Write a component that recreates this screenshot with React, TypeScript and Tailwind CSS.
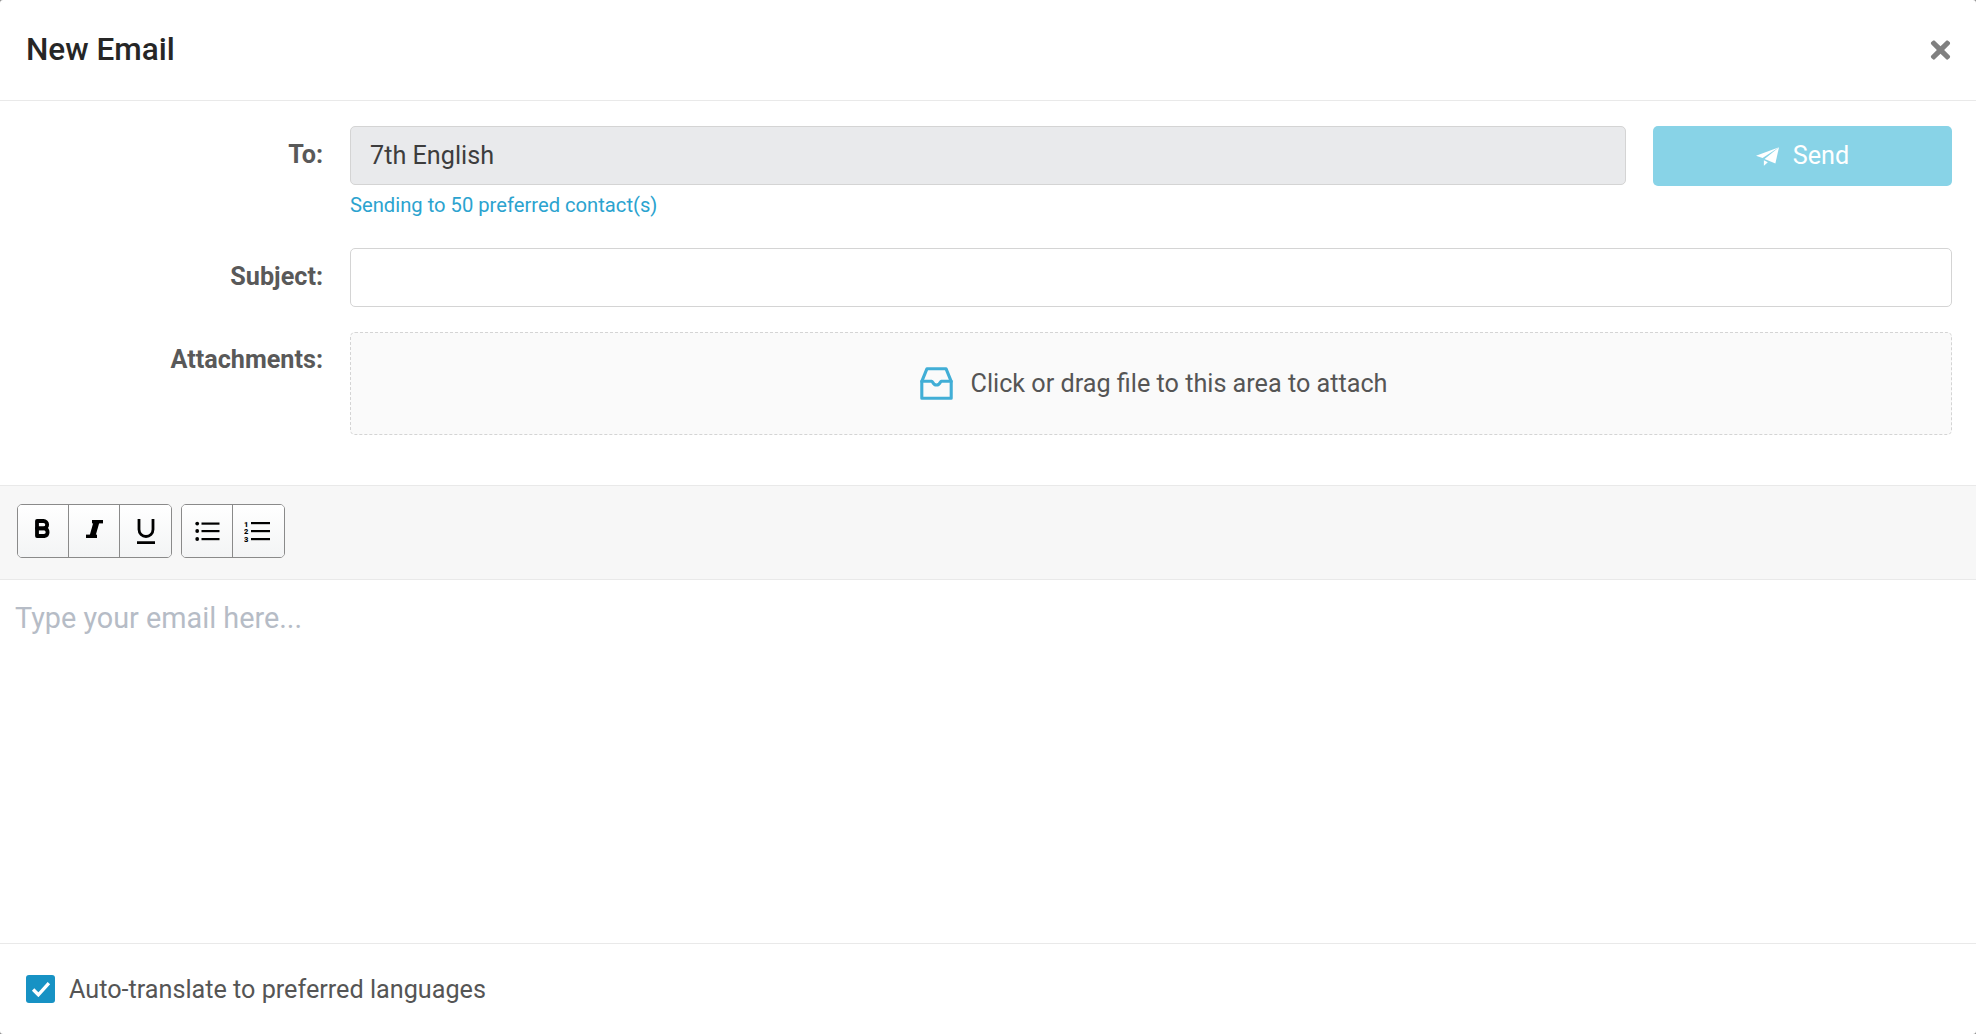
import React from "react";
import { FaTimes } from "react-icons/fa";

function InboxIcon() {
  return (
    <svg width="33" height="33" viewBox="0 0 33 33" fill="none" stroke="#41aed6" strokeWidth="3.1" strokeLinejoin="round" strokeLinecap="round">
      <path d="M7 1.7h19l5.2 12.6v17H1.8v-17z" />
      <path d="M1.8 14.2h10c1 0 1 3.8 4.7 3.8s3.7-3.8 4.7-3.8h10" />
    </svg>
  );
}

function ToolButton({ children, last }: { children: React.ReactNode; last?: boolean }) {
  return (
    <div className={"flex items-center justify-center h-full bg-gradient-to-b from-white to-[#f3f4f5] " + (last ? "" : "border-r border-[#8a8a8a]")}>
      {children}
    </div>
  );
}

function BoldIcon() {
  return (
    <svg width="16" height="19" viewBox="0 0 16 19" fill="none" stroke="black" strokeWidth="3.8" strokeLinejoin="round" className="mb-[5px]">
      <path d="M2 2h6.5a3.6 3.6 0 0 1 0 7.3H2z" />
      <path d="M2 9.3h7.3a3.9 3.9 0 0 1 0 7.7H2z" />
    </svg>
  );
}

function ItalicIcon() {
  return (
    <svg width="17" height="20" viewBox="0 0 17 20" fill="black" className="mb-[4px]">
      <rect x="6" y="1" width="11" height="3.4" />
      <rect x="0" y="15.6" width="11" height="3.4" />
      <polygon points="7.5,3 13.5,3 9.5,17 3.5,17" />
    </svg>
  );
}

function UnderlineIcon() {
  return (
    <svg width="20" height="26" viewBox="0 0 20 26" fill="none" stroke="black">
      <path d="M3 1v10.5a7 7 0 0 0 14 0V1" strokeWidth="2.8" />
      <path d="M1 24.6h18" strokeWidth="2.8" />
    </svg>
  );
}

function BulletIcon() {
  return (
    <svg width="25" height="20" viewBox="0 0 25 20" fill="black">
      <circle cx="2.2" cy="2.6" r="1.9" />
      <circle cx="2.2" cy="10" r="1.9" />
      <circle cx="2.2" cy="18" r="1.9" />
      <rect x="6.5" y="1.5" width="18" height="2.2" />
      <rect x="6.5" y="9" width="18" height="2.2" />
      <rect x="6.5" y="17" width="18" height="2.2" />
    </svg>
  );
}

function NumberIcon() {
  return (
    <svg width="26" height="22" viewBox="0 0 26 22" fill="black" fontFamily="Roboto, sans-serif" fontWeight="900" fontSize="7.5" className="mr-[3px]">
      <text x="0" y="6.5">1</text>
      <text x="0" y="14">2</text>
      <text x="0" y="21.5">3</text>
      <rect x="7" y="2" width="19" height="2.2" />
      <rect x="7" y="10" width="19" height="2.2" />
      <rect x="7" y="18" width="19" height="2.2" />
    </svg>
  );
}

export default function App() {
  return (
    <div className="w-[1976px] h-[1034px] bg-[#8c8c8c] overflow-hidden">
      <div className="w-full h-full rounded-[3px] bg-white flex flex-col overflow-hidden font-['Roboto',sans-serif]">
        <header className="h-[101px] shrink-0 border-b border-[#e9e9e9] flex items-center justify-between pl-[26px] pr-[23px]">
          <h1 className="text-[31.5px] font-medium text-[#262626] leading-none">New Email</h1>
          <FaTimes className="text-[#808080] w-[25px] h-[28px]" />
        </header>

        <div className="shrink-0 h-[385px] border-b border-[#e9e9e9] pt-[25px] pr-6">
          <div className="flex">
            <div className="w-[323px] text-right text-[25.2px] font-bold text-[#595959] leading-[57px] h-[54px] shrink-0">To:</div>
            <div className="ml-[27px] flex-1">
              <div className="flex gap-[27px] items-start">
                <div className="flex-1 h-[59px] rounded-[5px] border border-[#d4d4d4] bg-[#e9eaec] flex items-center pl-[19px] text-[25.2px] text-[#3d3d3d]">7th English</div>
                <button className="w-[299px] h-[60px] rounded-[5px] bg-[#88d3e7] text-white text-[25.2px] flex items-center justify-center gap-[14px]">
                  <svg width="23" height="19" viewBox="0 0 70 57" fill="white">
                    <path d="M70 0L0 26l20 7z" />
                    <path d="M70 0L26 36l33 14z" />
                    <path d="M24 40v17l12-11z" />
                  </svg>
                  Send
                </button>
              </div>
              <div className="text-[20.2px] text-[#2ba3cf] mt-[4px] leading-[30px]">Sending to 50 preferred contact(s)</div>
            </div>
          </div>

          <div className="flex mt-[28px]">
            <div className="w-[323px] text-right text-[25.2px] font-bold text-[#595959] leading-[57px] h-[59px] shrink-0">Subject:</div>
            <div className="ml-[27px] flex-1 h-[59px] rounded-[5px] border border-[#d4d4d4] bg-white" />
          </div>

          <div className="flex mt-[25px]">
            <div className="w-[323px] text-right text-[25.2px] font-bold text-[#595959] leading-[56px] shrink-0">Attachments:</div>
            <div className="ml-[27px] flex-1 h-[103px] rounded-[5px] border border-dashed border-[#d4d4d4] bg-[#fafafa] flex items-center justify-center gap-[18px] pl-[5px] text-[25.2px] text-[#555555]">
              <InboxIcon />
              Click or drag file to this area to attach
            </div>
          </div>
        </div>

        <div className="h-[94px] shrink-0 bg-[#f7f7f7] border-b border-[#e9e9e9] flex items-start pt-[18px] pl-[17px] gap-[9px] text-black">
          <div className="w-[155px] h-[54px] rounded-[5px] border border-[#8a8a8a] grid grid-cols-3 overflow-hidden">
            <ToolButton><BoldIcon /></ToolButton>
            <ToolButton><ItalicIcon /></ToolButton>
            <ToolButton last><UnderlineIcon /></ToolButton>
          </div>
          <div className="w-[104px] h-[54px] rounded-[5px] border border-[#8a8a8a] grid grid-cols-2 overflow-hidden">
            <ToolButton><BulletIcon /></ToolButton>
            <ToolButton last><NumberIcon /></ToolButton>
          </div>
        </div>

        <div className="flex-1 pl-[15px] pt-[20px] text-[28.8px] text-[#b6bcc6] leading-[36px]">Type your email here...</div>

        <footer className="h-[91px] shrink-0 border-t border-[#e9e9e9] flex items-center pl-[26px] gap-[14px] text-[25.2px] text-[#555555]">
          <span className="w-[29px] h-[28px] rounded-[3px] bg-[#1792c4] flex items-center justify-center">
            <svg width="20" height="16" viewBox="0 0 19 15" fill="none" stroke="white" strokeWidth="3.2">
              <path d="M2 8l5 5 10-11" />
            </svg>
          </span>
          <span className="pt-[2px]">Auto-translate to preferred languages</span>
        </footer>
      </div>
    </div>
  );
}
